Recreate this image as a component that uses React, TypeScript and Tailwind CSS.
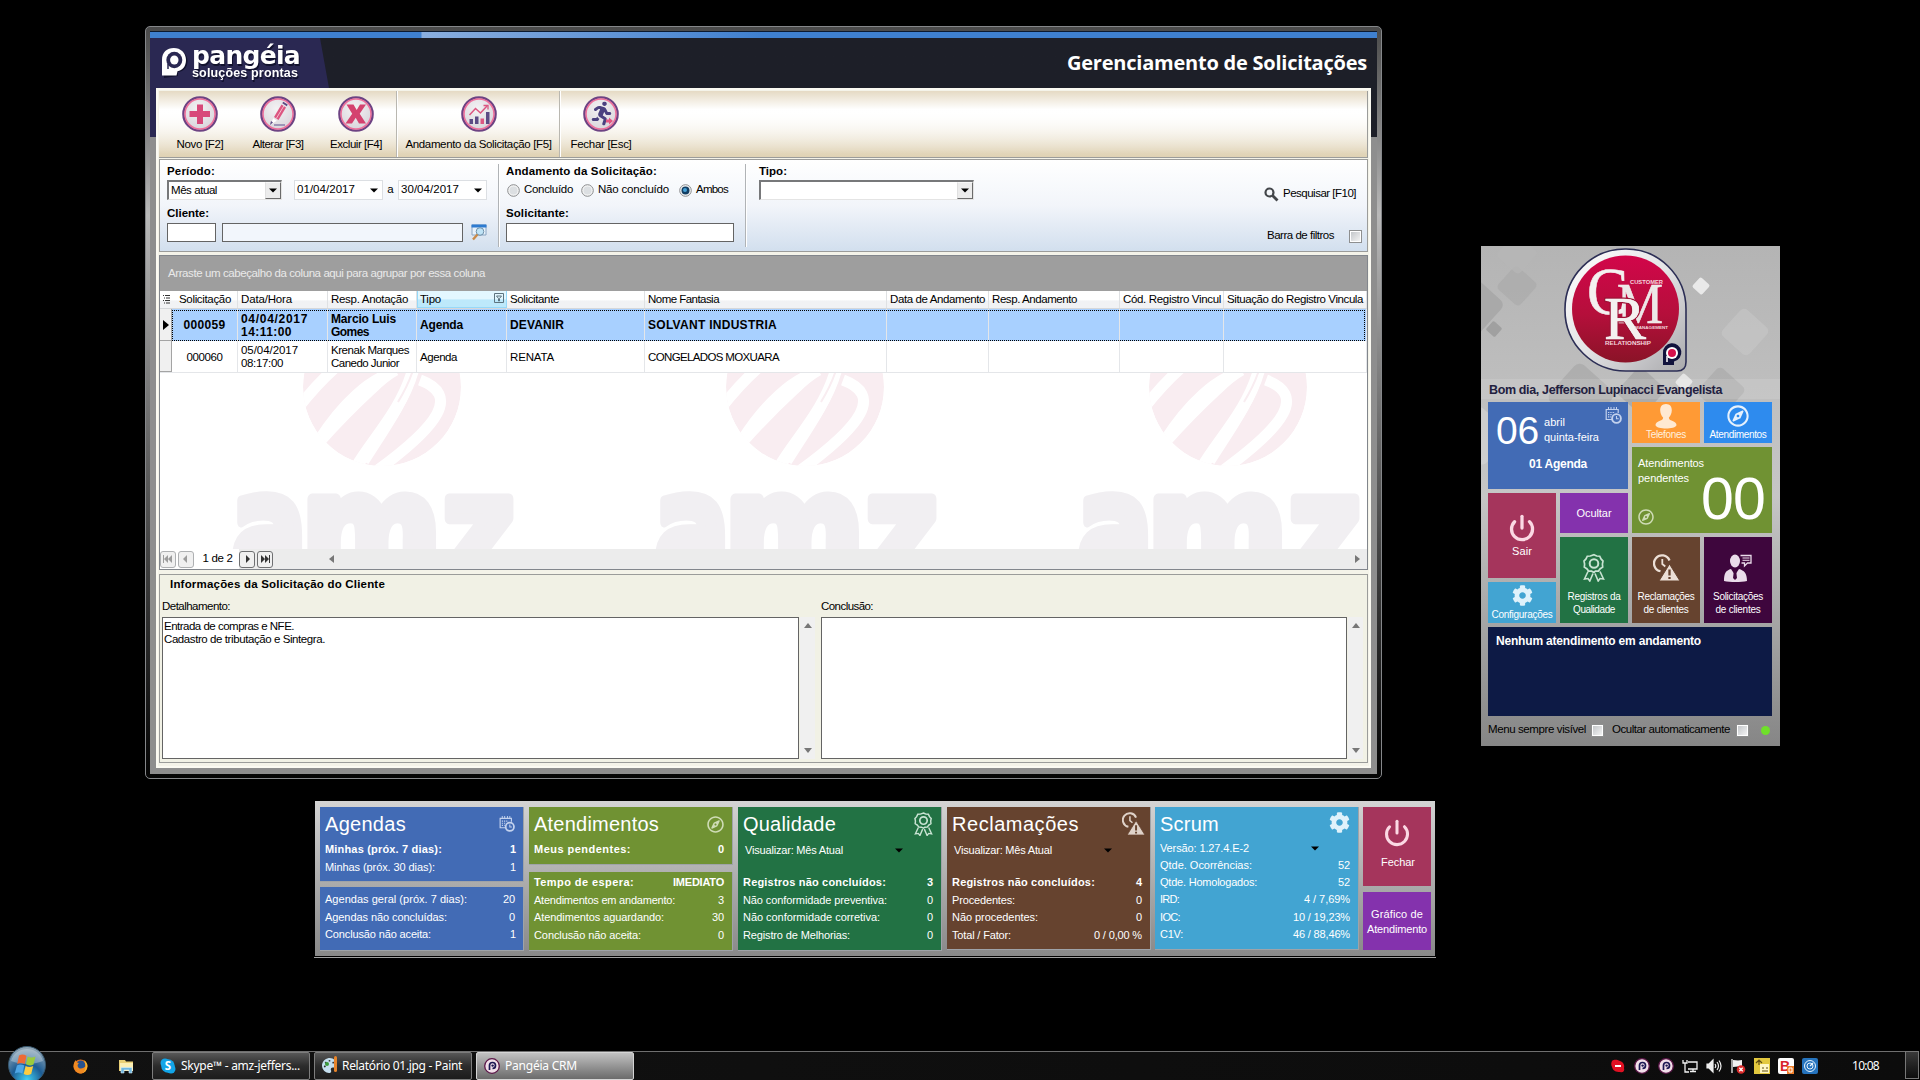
import React, { useLayoutEffect, useRef } from "react";
import { Power } from "lucide-react";
import { FaCog, FaRegCompass, FaRunning, FaPalette } from "react-icons/fa";

type FitProps = { w: number; children: string; className?: string };

/* Tracks a run of text in or out so that it occupies exactly `w` pixels. */
function Fit({ w, children, className = "" }: FitProps) {
  const ref = useRef<HTMLSpanElement>(null);
  useLayoutEffect(() => {
    const el = ref.current;
    if (!el) return;
    el.style.width = "max-content";
    el.style.letterSpacing = "0px";
    const natural = el.getBoundingClientRect().width;
    el.style.letterSpacing = `${(w - natural) / children.length}px`;
    el.style.width = `${w}px`;
  }, [w, children]);
  return (
    <span ref={ref} className={`inline-block shrink-0 whitespace-nowrap ${className}`}>
      {children}
    </span>
  );
}

/* ---------- icons ---------- */

function RoundIcon({ children }: { children: React.ReactNode }) {
  return (
    <svg width="38" height="38" viewBox="0 0 38 38">
      <defs>
        <radialGradient id="rg" cx="0.45" cy="0.35" r="0.7">
          <stop offset="0" stopColor="#f4f2f4" />
          <stop offset="1" stopColor="#d5d2d8" />
        </radialGradient>
      </defs>
      <circle cx="19" cy="19" r="16.6" fill="url(#rg)" stroke="#6d4383" strokeWidth="2.4" />
      <circle cx="19" cy="19" r="15" fill="none" stroke="#ee6f9b" strokeWidth="1.5" />
      {children}
    </svg>
  );
}

const NovoIcon = () => (
  <RoundIcon>
    <path d="M16 9.5h6v6.5h7v6h-7v7h-6v-7H8.500v-6H16z" fill="#d8497a" />
  </RoundIcon>
);
const AlterarIcon = () => (
  <RoundIcon>
    <path d="M22.500 9.500l4.500 3-7.500 12.500-4.500-3z" fill="#dc5681" />
    <path d="M23.300 8.200l1-1.400 4.400 2.800-.9 1.700z" fill="#5b4a84" />
    <path d="M14.200 23.200l3.600 2.500-6.300 4z" fill="#fff" />
    <path d="M24.800 11l-7.500 12.500" stroke="#f5b9cc" strokeWidth="1" />
    <path d="M12 26l2 1.500-3 2.500z" fill="#5b4a84" />
    <path d="M15 30h11" stroke="#8c84ad" strokeWidth="1.600" />
  </RoundIcon>
);
const ExcluirIcon = () => (
  <RoundIcon>
    <path d="M9.500 9.500h7l3.200 5.600 3.300-5.600h6l-6.300 9.300 6.300 9.700h-7l-3.300-5.700-3.700 5.700h-6.500l6.700-9.700z" fill="#d4426f" />
  </RoundIcon>
);
const ChartIcon = () => (
  <RoundIcon>
    <path d="M9.500 29v-5h3.500v5zM15 29v-7.500h3.500V29z" fill="#5b4a84" />
    <path d="M20.500 29v-5.500H24V29z" fill="#dc5681" />
    <path d="M26 29V17h3.500v12z" fill="#5b4a84" />
    <path d="M9.500 20l6-6.500 5 4.500 6.500-7" stroke="#dc5681" strokeWidth="1.500" fill="none" />
    <path d="M23.500 10.500h4.500v4" stroke="#dc5681" strokeWidth="1.300" fill="none" />
  </RoundIcon>
);
const RunIcon = () => (
  <RoundIcon>
    <g transform="translate(7.500 6.500)">
      <FaRunning size={24} color="#4b4180" />
    </g>
    <path d="M24 24.500h3v-2l4 3.500-4 3.500v-2h-3z" fill="#e35583" />
  </RoundIcon>
);

const CalendarClockIcon = ({ size, color }: { size: number; color: string }) => (
  <svg width={size} height={size} viewBox="0 0 17 17" fill="none" stroke={color}>
    <path d="M.7 2.500h13M1.200 2v10.500H7M13.200 2.500v3.500" strokeWidth="1.200" />
    <path d="M3.500 0v3M6 0v3M9 0v3M11.500 0v3" strokeWidth="1" />
    <path d="M3 5.500h7M3 7.700h4.500M3 9.900h3" strokeWidth="1.200" strokeDasharray="1.300 1" />
    <circle cx="11.500" cy="11.500" r="4.400" strokeWidth="1.900" />
    <path d="M11.500 9v2.700h2.200" strokeWidth="1.100" />
  </svg>
);

const AwardIcon = ({ w, h, color }: { w: number; h: number; color: string }) => (
  <svg width={w} height={h} viewBox="0 0 22 28" fill="none" stroke={color}>
    <path d="M11 1.200l2.700 1.300 3 .2 1.300 2.700 2 2.200-.6 3 .3 3-2.500 1.600-1.800 2.400-3 .1L11 18.900l-2.400-1.200-3-.1-1.800-2.400-2.500-1.600.3-3-.6-3 2-2.200 1.300-2.700 3-.2z" strokeWidth="1.700" />
    <circle cx="11" cy="10" r="4.300" strokeWidth="2" />
    <path d="M5 18L1.500 25.500l3.500-.5 1.800 2.500L10 20M17 18l3.500 7.500-3.500-.5-1.800 2.500L12 20" strokeWidth="1.600" />
  </svg>
);

const ClockWarnIcon = ({ w, h, color, cut }: { w: number; h: number; color: string; cut: string }) => (
  <svg width={w} height={h} viewBox="0 0 27 27" fill="none">
    <path d="M7.500 16.700A8 8 0 1 1 16.500 6" stroke={color} strokeWidth="2.300" />
    <path d="M9.300 4.500v5l3 2.500" stroke={color} strokeWidth="1.800" />
    <path d="M16.500 9.500L27 26.500H6z" fill={color} stroke={cut} strokeWidth="1" />
    <path d="M16.500 15v6M16.500 22.600v2" stroke={cut} strokeWidth="2.300" />
  </svg>
);

const BustIcon = () => (
  <svg width="22" height="25" viewBox="0 0 22 25">
    <path d="M11 0c4 0 6 2.800 5.800 6.500-.2 3-1.300 5.600-2.900 7 0 1.600.5 2.100 2.600 3 3.300 1.400 5 2.500 5 4.500 0 2.500-6 3.500-10.500 3.500S.500 23.500.500 21c0-2 1.700-3.100 5-4.500 2.100-.9 2.600-1.400 2.600-3-1.600-1.400-2.700-4-2.900-7C5 2.800 7 0 11 0z" fill="#ffe9d2" />
  </svg>
);

const ClientIcon = () => (
  <svg width="28" height="28" viewBox="0 0 28 28">
    <ellipse cx="11" cy="7" rx="5" ry="6.500" fill="#eadcea" />
    <path d="M0 27c0-8 2-10.500 7-12l4 6 4-6c5 1.500 8 4 8 12-6 1.300-17 1.300-23 0z" fill="#eadcea" />
    <path d="M10 16h2l1 8-2 2-2-2z" fill="#41093f" />
    <path d="M16.500 1.500H27V9h-3.500l-3 3V9H17.500" fill="#41093f" stroke="#eadcea" strokeWidth="1.300" />
    <path d="M18.500 4h7M18.500 6.300h7" stroke="#eadcea" strokeWidth="1" />
  </svg>
);

const PangeiaMark = () => (
  <svg width="27" height="31" viewBox="0 0 27 31">
    <path d="M2 30V13C2 5 7 1.500 13.500 1.500S25.500 6 25.500 13c0 6.500-4 10.500-9.500 11v4z" transform="translate(1 1)" fill="#12122e" />
    <path d="M1 28.500V13C1 5 6 1 12.800 1S25 5.800 25 13c0 6.300-3.500 10.500-8.500 11.300L15.500 28.500z" fill="#fff" />
    <ellipse cx="13.300" cy="13" rx="8" ry="8.300" fill="#2a2852" />
    <ellipse cx="13.300" cy="13" rx="4.200" ry="4.600" fill="#fff" />
    <path d="M7 17v5" stroke="#2a2852" strokeWidth="1.500" />
  </svg>
);

const Caret = ({ className = "" }: { className?: string }) => (
  <svg width="8" height="5" viewBox="0 0 8 5" className={`shrink-0 ${className}`}>
    <path d="M0 .5h8L4 4.500z" fill="#000" />
  </svg>
);

const CheckBox = () => (
  <span className="block size-[13px] shrink-0 border border-[#8e8f8f] bg-white p-px">
    <span className="block size-full bg-linear-to-br from-[#c4c7ca] to-[#f3f3f3]" />
  </span>
);

function Radio({ on = false }: { on?: boolean }) {
  return (
    <svg width="13" height="13" viewBox="0 0 13 13" className="shrink-0">
      <circle cx="6.500" cy="6.500" r="5.800" fill="#f4f4f4" stroke="#8a8c8e" />
      <circle cx="6.500" cy="6.500" r="4" fill={on ? "#123e63" : "#dcdfe2"} />
      {on && <circle cx="6" cy="6" r="2" fill="#45a0d6" />}
    </svg>
  );
}

/* ---------- request window ---------- */

function ToolButton({ icon, label, w, cls }: { icon: React.ReactNode; label: string; w: number; cls: string }) {
  return (
    <div className={`flex flex-col items-center pt-1 ${cls}`}>
      {icon}
      <div className="mt-1 flex h-4 items-center">
        <Fit w={w}>{label}</Fit>
      </div>
    </div>
  );
}

function Combo({ cls, children }: { cls: string; children?: React.ReactNode }) {
  return (
    <div className={`flex h-5 items-center justify-between border-t-2 border-l-2 border-r border-b border-t-[#77787a] border-r-[#e4e4e4] border-b-[#e4e4e4] border-l-[#77787a] bg-white pl-0.5 ${cls}`}>
      {children ?? <span />}
      <span className="flex h-[17px] w-4 items-center justify-center border border-t-[#f8f8f8] border-r-[#6b6b6b] border-b-[#6b6b6b] border-l-[#e0e0e0] bg-[#ececec]">
        <Caret />
      </span>
    </div>
  );
}

function DateBox({ value }: { value: string }) {
  return (
    <div className="flex h-5 w-[89px] items-center justify-between border border-[#dcdfe3] bg-white pr-1 pl-[2px]">
      <Fit w={58}>{value}</Fit>
      <Caret />
    </div>
  );
}

function FilterPanel() {
  return (
    <div className="mt-px flex h-[93px] border border-[#9b9c9a] bg-linear-to-b from-white via-[#f2f5fa] to-[#d2dfee]">
      <div className="w-[338px] pt-1 pl-[7px]">
        <div className="flex h-4 items-center font-bold"><Fit w={48}>Período:</Fit></div>
        <div className="flex h-5 items-center">
          <Combo cls="w-[115px]"><Fit w={46}>Mês atual</Fit></Combo>
          <div className="ml-3"><DateBox value="01/04/2017" /></div>
          <span className="mx-[5px] flex w-[5px] justify-center">a</span>
          <DateBox value="30/04/2017" />
        </div>
        <div className="mt-1.5 flex h-4 items-center font-bold"><Fit w={42}>Cliente:</Fit></div>
        <div className="mt-px flex h-[19px] items-center">
          <span className="h-[19px] w-[49px] border border-[#646464] bg-white" />
          <span className="ml-1.5 h-[19px] w-[241px] border border-[#646464] bg-[#f2f6fc]" />
          <svg width="17" height="17" viewBox="0 0 17 17" className="ml-2">
            <path d="M1 1h14v10H1z" fill="#e8f2fb" stroke="#8aa6c4" />
            <path d="M.5 .5h15v3H.5z" fill="#2e7bd0" />
            <circle cx="9" cy="7.500" r="3.800" fill="#bfe3f6" stroke="#6f8fa8" />
            <path d="M6.500 10.500L2 15.500" stroke="#c98a4a" strokeWidth="2.400" />
          </svg>
        </div>
      </div>
      <div className="my-1 w-[2px] border-l border-[#b0b3b6] bg-white" />
      <div className="w-[245px] pt-1 pl-[6px]">
        <div className="flex h-4 items-center font-bold"><Fit w={151}>Andamento da Solicitação:</Fit></div>
        <div className="flex h-5 items-center pl-px">
          <Radio /><Fit w={49} className="ml-[4px]">Concluído</Fit>
          <span className="ml-2 flex items-center"><Radio /></span><Fit w={71} className="ml-[4px]">Não concluído</Fit>
          <span className="ml-2.5 flex items-center"><Radio on /></span><Fit w={32} className="ml-[4px]">Ambos</Fit>
        </div>
        <div className="mt-1.5 flex h-4 items-center font-bold"><Fit w={63}>Solicitante:</Fit></div>
        <div className="mt-px h-[19px] w-[228px] border border-[#646464] bg-white" />
      </div>
      <div className="my-1 w-[2px] border-l border-[#b0b3b6] bg-white" />
      <div className="flex grow justify-between pt-1 pl-[12px]">
        <div>
          <div className="flex h-4 items-center font-bold"><Fit w={28}>Tipo:</Fit></div>
          <Combo cls="w-[215px]" />
        </div>
        <div className="flex w-[103px] flex-col pt-[21px]">
          <div className="flex h-[18px] items-center">
            <svg width="15" height="15" viewBox="0 0 15 15" fill="none" stroke="#43464a" className="mr-[4px]">
              <circle cx="5.500" cy="5.500" r="4" strokeWidth="2.200" />
              <path d="M8.500 8.500l5 5" strokeWidth="2.800" />
            </svg>
            <Fit w={73}>Pesquisar [F10]</Fit>
          </div>
          <div className="mt-6 flex h-[18px] items-center justify-between pr-[5px] pl-[3px]">
            <Fit w={67}>Barra de filtros</Fit>
            <CheckBox />
          </div>
        </div>
      </div>
    </div>
  );
}

const gridCols = "grid grid-cols-[12px_66px_90px_89px_90px_138px_242px_102px_131px_104px_143px]";

function HeadCell({ w, children, cls = "" }: { w: number; children: string; cls?: string }) {
  return (
    <div className={`flex items-center overflow-hidden border-r border-[#dfe1e3] pt-px pl-[3px] ${cls}`}>
      <Fit w={w}>{children}</Fit>
    </div>
  );
}

function Cell({ lines, cls = "" }: { lines: [string, number][]; cls?: string }) {
  return (
    <div className={`flex flex-col justify-center border-r border-[#e4e6e9] pt-px pl-[3px] leading-[13px] ${cls}`}>
      {lines.map(([t, w]) => <Fit key={t} w={w}>{t}</Fit>)}
    </div>
  );
}

function Watermark() {
  return (
    <svg width="1207" height="176" viewBox="160 373 1207 176" className="block">
      {[0, 423, 846].map((dx) => (
        <g key={dx} transform={`translate(${dx} 0)`}>
          <clipPath id={`orb${dx}`}><circle cx="382" cy="387" r="79" /></clipPath>
          <g clipPath={`url(#orb${dx})`} fill="none" stroke="#fff">
            <circle cx="382" cy="387" r="79" fill="#f9edf1" stroke="none" />
            <path d="M342 362Q320 380 298 408" strokeWidth="11" />
            <path d="M396 371Q385 377 372 390Q345 415 320 443" strokeWidth="9" />
            <path d="M396 371C370 376 340 405 318 440" strokeWidth="9" />
            <path d="M413 370C402 410 372 440 357 466" strokeWidth="12" />
            <path d="M414 372C404 405 385 430 365 462" strokeWidth="8" />
            <path d="M420 380C460 395 440 425 375 472" strokeWidth="11" />
            <path d="M413 370C409 383 404 392 398 402" stroke="#f9edf1" strokeWidth="2" />
          </g>
          <g fontFamily="DejaVu Sans" fontWeight="700" fontSize="156" fill="#f1eff2" stroke="#f1eff2" strokeWidth="11" strokeLinejoin="round">
            <text x="231" y="585" textLength="76" lengthAdjust="spacingAndGlyphs">a</text>
            <text x="301" y="585" textLength="141" lengthAdjust="spacingAndGlyphs">m</text>
            <text x="442" y="585" textLength="73" lengthAdjust="spacingAndGlyphs">z</text>
          </g>
        </g>
      ))}
    </svg>
  );
}

function NavButton({ d, off = false }: { d: string; off?: boolean }) {
  return (
    <span className={`flex h-[17px] w-4 items-center justify-center rounded-[3px] border bg-[#f0f0f0] ${off ? "border-[#aeb0b2]" : "border-[#6f7072]"}`}>
      <svg width="10" height="8" viewBox="0 0 10 8"><path d={d} fill={off ? "#9c9c9c" : "#333"} /></svg>
    </span>
  );
}

function Grid() {
  return (
    <div className="mt-[3px] h-[315px] border border-[#82868c] bg-white">
      <div className="flex h-[35px] items-center bg-[#9e9e9e] pt-px pl-2 text-[#e9e9e9]">
        <Fit w={317}>Arraste um cabeçalho da coluna aqui para agrupar por essa coluna</Fit>
      </div>
      <div className={`${gridCols} h-[18px] border-b border-[#d5d7da] bg-linear-to-b from-white from-50% to-[#f1f2f4] to-60%`}>
        <div className="flex items-center justify-center">
          <svg width="7" height="9" viewBox="0 0 7 9" stroke="#333"><path d="M0 .5h1M2 .5h5M1 3h1M3 3h4M0 5.500h1M2 5.500h5M1 8h1M3 8h4" /></svg>
        </div>
        <HeadCell w={52} cls="!pl-[7px]">Solicitação</HeadCell>
        <HeadCell w={51}>Data/Hora</HeadCell>
        <HeadCell w={77}>Resp. Anotação</HeadCell>
        <div className="flex items-center justify-between border border-t-0 border-[#96d9f9] bg-linear-to-b from-[#e3f7ff] from-50% to-[#bde9fb] to-55% pt-0.5 pr-0.5 pl-[2px]">
          <Fit w={21}>Tipo</Fit>
          <svg width="10" height="10" viewBox="0 0 10 10" fill="none" stroke="#5d7480" className="-mt-1"><path d="M.5 .5h9v9h-9zM2.500 3h5L5.500 5.500V8h-1V5.500z" /></svg>
        </div>
        <HeadCell w={49}>Solicitante</HeadCell>
        <HeadCell w={71}>Nome Fantasia</HeadCell>
        <HeadCell w={95}>Data de Andamento</HeadCell>
        <HeadCell w={85}>Resp. Andamento</HeadCell>
        <HeadCell w={98}>Cód. Registro Vincul</HeadCell>
        <HeadCell w={136}>Situação do Registro Vincula</HeadCell>
      </div>
      <div className={`${gridCols} relative h-[32px] bg-[#a8d0ff] text-[12px] font-bold`}>
        <div className="flex items-center justify-center border-r border-b border-[#a4a4a4] bg-[#f0f0f0]">
          <svg width="6" height="10" viewBox="0 0 6 10"><path d="M0 0l6 5-6 5z" /></svg>
        </div>
        <Cell lines={[["000059", 42]]} cls="items-center !pl-0" />
        <Cell lines={[["04/04/2017", 67], ["14:11:00", 51]]} />
        <Cell lines={[["Marcio Luis", 65], ["Gomes", 38]]} />
        <Cell lines={[["Agenda", 43]]} />
        <Cell lines={[["DEVANIR", 54]]} />
        <Cell lines={[["SOLVANT INDUSTRIA", 129]]} />
        <Cell lines={[]} /><Cell lines={[]} /><Cell lines={[]} /><Cell lines={[]} />
        <div className="absolute top-px right-0.5 bottom-0 left-3 border border-dotted border-black" />
      </div>
      <div className={`${gridCols} h-[32px] border-b border-[#e4e6e9]`}>
        <div className="border-r border-b border-[#a4a4a4] bg-[#f0f0f0]" />
        <Cell lines={[["000060", 36]]} cls="items-center !pl-0" />
        <Cell lines={[["05/04/2017", 57], ["08:17:00", 42]]} />
        <Cell lines={[["Krenak Marques", 78], ["Canedo Junior", 68]]} />
        <Cell lines={[["Agenda", 37]]} />
        <Cell lines={[["RENATA", 44]]} />
        <Cell lines={[["CONGELADOS MOXUARA", 131]]} />
        <Cell lines={[]} /><Cell lines={[]} /><Cell lines={[]} /><Cell lines={[]} />
      </div>
      <Watermark />
      <div className="flex h-[20px] items-center bg-[#ececec]">
        <div className="flex h-full items-center gap-0.5 bg-white">
          <NavButton off d="M1 0v8H0V0zM5 0v8L1 4zM9 0v8L5 4z" />
          <NavButton off d="M6 0v8L2 4z" />
          <span className="flex w-[43px] justify-center"><Fit w={30}>1 de 2</Fit></span>
        </div>
        <div className="flex items-center gap-0.5">
          <NavButton d="M4 0v8l4-4z" />
          <NavButton d="M1 0v8l4-4zM5 0v8l4-4zM9 0h1v8H9z" />
        </div>
        <div className="ml-[56px] flex grow items-center justify-between pr-[7px]">
          <svg width="5" height="8" viewBox="0 0 5 8"><path d="M5 0v8L0 4z" fill="#777" /></svg>
          <svg width="5" height="8" viewBox="0 0 5 8"><path d="M0 0v8l5-4z" fill="#777" /></svg>
        </div>
      </div>
    </div>
  );
}

function VScroll() {
  return (
    <div className="ml-px flex w-[15px] flex-col items-center justify-between bg-[#f0f0f0] py-[6px]">
      <svg width="8" height="5" viewBox="0 0 8 5"><path d="M0 5h8L4 0z" fill="#777" /></svg>
      <svg width="8" height="5" viewBox="0 0 8 5"><path d="M0 0h8L4 5z" fill="#777" /></svg>
    </div>
  );
}

function RequestWindow() {
  return (
    <div className="absolute top-[26px] left-[145px] h-[753px] w-[1237px] rounded-[5px] border border-[#85878a] bg-linear-to-b from-[#4a4a4a] via-[#b9b9b9] via-25% to-[#050505] to-25.1% p-[4px] text-[11.5px] leading-none text-black">
      <div className="flex h-[743px] flex-col bg-[#0b1a30] pt-px">
        <div className="h-[6px] shrink-0 bg-linear-to-r from-[#3f80cf] from-[271px] via-[#8aaede] via-[272px] to-[#3f80cf] to-50%" />
        <div className="h-[737px] bg-linear-to-b from-[#1d1f28] from-[99px] to-[#8e8e8e] to-[99px]">
          <div className="relative flex h-[50px] items-center justify-between pr-[10px]">
            <svg width="180" height="99" viewBox="0 0 180 99" className="absolute top-0 left-0">
              <path d="M0 0h170l9 50H6v49H0z" fill="#2a2852" />
            </svg>
            <div className="relative flex pl-[11px]">
              <div><PangeiaMark /></div>
              <div className="ml-[4px] flex flex-col text-white drop-shadow-[1px_2px_0_#12122e]">
                <Fit w={108} className="-mt-[5px] font-['DejaVu_Sans'] text-[25px] leading-[27px] font-bold">pangéia</Fit>
                <Fit w={106} className="-mt-0.5 font-['Liberation_Sans'] text-[12.5px] leading-[12px] font-bold">soluções prontas</Fit>
              </div>
            </div>
            <Fit w={300} className="font-['Open_Sans'] text-[20px] font-bold text-white">Gerenciamento de Solicitações</Fit>
          </div>
          <div className="mx-[6px] h-[680px] border-2 border-[#fbfaf2] bg-[#f4f3e9] px-px">
            <div className="mt-px flex h-[67px] border-r border-b border-[#9b9c9a] bg-linear-to-b from-[#e5dac4] via-white via-28% to-[#dfd2b4]">
              <div className="flex grow bg-linear-to-b from-transparent from-28% via-white via-30% to-transparent to-95%">
                <ToolButton icon={<NovoIcon />} label="Novo [F2]" w={47} cls="ml-[2px] w-[78px]" />
                <ToolButton icon={<AlterarIcon />} label="Alterar [F3]" w={51} cls="w-[78px]" />
                <ToolButton icon={<ExcluirIcon />} label="Excluir [F4]" w={52} cls="w-[78px]" />
                <div className="ml-px w-[2px] border-l border-[#b9b7b0] bg-white" />
                <ToolButton icon={<ChartIcon />} label="Andamento da Solicitação [F5]" w={146} cls="w-[161px]" />
                <div className="w-[2px] border-l border-[#b9b7b0] bg-white" />
                <ToolButton icon={<RunIcon />} label="Fechar [Esc]" w={61} cls="w-[80px]" />
              </div>
            </div>
            <FilterPanel />
            <Grid />
            <div className="mt-[4px] flex h-[189px] flex-col border border-[#9b9c9a] bg-[#f1f1e5]">
              <div className="flex h-[20px] items-center pl-[10px] font-bold"><Fit w={215}>Informações da Solicitação do Cliente</Fit></div>
              <div className="mt-[3px] flex h-[18px] items-center">
                <div className="w-[658px] pl-[2px]"><Fit w={68}>Detalhamento:</Fit></div>
                <Fit w={52} className="ml-[3px]">Conclusão:</Fit>
              </div>
              <div className="mt-px flex h-[142px] pl-[2px]">
                <div className="flex w-[637px] flex-col border border-[#646464] bg-white pt-[2px] pl-px leading-[13px]">
                  <Fit w={130}>Entrada de compras e NFE.</Fit>
                  <Fit w={161}>Cadastro de tributação e Sintegra.</Fit>
                </div>
                <VScroll />
                <div className="ml-[6px] w-[526px] border border-[#646464] bg-white" />
                <VScroll />
              </div>
            </div>
          </div>
        </div>
      </div>
    </div>
  );
}

/* ---------- CRM side menu ---------- */

function MenuBackdrop() {
  const diamonds: [number, number, number, string, number][] = [
    [-8, 60, 46, "#a2a2a2", 0.7], [36, 40, 30, "#a6a6a6", 0.5], [13, 83, 12, "#9a9a9a", 0.8], [36, 8, 30, "#b6b6b6", 0.7],
    [220, 40, 13, "#eeeeee", 0.9], [203, 136, 13, "#e8e8e8", 0.9], [264, 86, 36, "#c9c9c9", 0.5], [100, 150, 50, "#9f9f9f", 0.5],
    [160, 145, 36, "#989898", 0.5], [240, 145, 36, "#a4a4a4", 0.5], [0, 190, 44, "#dadada", 0.5], [80, 200, 60, "#aaaaaa", 0.5],
  ];
  return (
    <svg width="299" height="500" viewBox="0 0 299 500" className="absolute inset-0">
      {diamonds.map(([x, y, s, c, o], i) => (
        <rect key={i} x={x - s / 2} y={y - s / 2} width={s} height={s} rx={s / 7} fill={c} opacity={o} transform={`rotate(42 ${x} ${y})`} />
      ))}
      <rect y="133" width="299" height="20" fill="#fff" opacity="0.12" />
    </svg>
  );
}

function CrmLogo() {
  return (
    <svg width="126" height="126" viewBox="0 0 126 126">
      <defs>
        <linearGradient id="rim" x1="0" y1="0" x2="1" y2="1">
          <stop offset="0" stopColor="#ffffff" /><stop offset="0.5" stopColor="#e4e4e6" /><stop offset="1" stopColor="#a9a9ac" />
        </linearGradient>
        <linearGradient id="red" x1="0" y1="0" x2="0" y2="1">
          <stop offset="0" stopColor="#d2064a" /><stop offset="0.55" stopColor="#b50f3b" /><stop offset="1" stopColor="#8a1327" />
        </linearGradient>
      </defs>
      <path d="M62 2a60 60 0 0 1 61 60v53c0 6-3 9-9 9H65A61 61 0 0 1 2 62 60 60 0 0 1 62 2z" fill="url(#rim)" stroke="#2c2e55" strokeWidth="1.600" />
      <circle cx="62.500" cy="62" r="53.500" fill="url(#red)" />
      <g fontFamily="Liberation Serif" fill="#f4f1f0" stroke="#f4f1f0" strokeWidth="0.600">
        <text x="24" y="67" fontSize="68" textLength="41" lengthAdjust="spacingAndGlyphs">C</text>
        <text x="54" y="76" fontSize="56" textLength="46" lengthAdjust="spacingAndGlyphs" fill="#ece7e7">M</text>
        <text x="41" y="92" fontSize="62" textLength="42" lengthAdjust="spacingAndGlyphs" stroke="#9b1436" strokeWidth="3" paintOrder="stroke">R</text>
        <text x="41" y="92" fontSize="62" textLength="42" lengthAdjust="spacingAndGlyphs">R</text>
      </g>
      <g fontFamily="Liberation Sans" fontWeight="700" fill="#f3d5dc">
        <text x="67" y="37" fontSize="5" textLength="33" lengthAdjust="spacingAndGlyphs">CUSTOMER</text>
        <text x="72" y="81.500" fontSize="4" textLength="33" lengthAdjust="spacingAndGlyphs">MANAGEMENT</text>
        <text x="42" y="98" fontSize="4.500" textLength="46" lengthAdjust="spacingAndGlyphs">RELATIONSHIP</text>
      </g>
      <path d="M100 118v-12a9.200 9.200 0 1 1 11 8.500V118z" fill="#11123c" />
      <circle cx="109" cy="106" r="6" fill="#fff" /><circle cx="109" cy="106" r="4" fill="#d5114b" />
      <path d="M104 109v6" stroke="#fff" strokeWidth="1.500" />
    </svg>
  );
}

function CrmMenu() {
  return (
    <div className="absolute top-[246px] left-[1481px] h-[500px] w-[299px] overflow-hidden bg-linear-to-b from-[#b4b4b4] via-[#c6c6c6] via-50% to-[#868686] text-[11px] leading-none text-white">
      <MenuBackdrop />
      <div className="relative flex h-full flex-col pl-[7px]">
        <div className="flex h-[133px] pl-[75px] pt-px"><CrmLogo /></div>
        <div className="flex h-[23px] items-center pl-px font-bold text-[#22203f]">
          <Fit w={233} className="text-[12.5px]">Bom dia, Jefferson Lupinacci Evangelista</Fit>
        </div>
        <div className="grid grid-cols-[68px_68px_68px_68px] grid-rows-[41px_42px_40px_41px_41px_89px] gap-1">
          <div className="relative col-span-2 row-span-2 bg-[#426bb5]">
            <div className="flex items-center pt-[7px] pl-2">
              <Fit w={43} className="text-[39px] leading-[44px]">06</Fit>
              <div className="-mt-[2px] ml-[5px] flex flex-col text-[11px] leading-[15px]">
                <Fit w={21}>abril</Fit><Fit w={55}>quinta-feira</Fit>
              </div>
            </div>
            <div className="mt-[3px] flex justify-center text-[12px] leading-[16px] font-bold"><Fit w={58}>01 Agenda</Fit></div>
            <div className="absolute top-[5px] right-[6px]"><CalendarClockIcon size={17} color="#c3d2ee" /></div>
          </div>
          <div className="flex flex-col items-center bg-[#ff9a35] pt-[2px]">
            <BustIcon /><Fit w={40} className="mt-px text-[10px] text-[#fff0df]">Telefones</Fit>
          </div>
          <div className="flex flex-col items-center bg-[#2e8bee] pt-[3px]">
            <FaRegCompass size={22} color="#e6f1fd" /><Fit w={57} className="mt-[3px] text-[10px]">Atendimentos</Fit>
          </div>
          <div className="relative col-span-2 row-span-2 bg-[#709233] pt-[9px] pl-[6px] leading-[15px]">
            <div className="flex flex-col"><Fit w={66}>Atendimentos</Fit><Fit w={51}>pendentes</Fit></div>
            <div className="absolute bottom-[8px] left-[6px]"><FaRegCompass size={16} color="#cfdcb6" /></div>
            <div className="absolute right-[7px] bottom-[4px] flex"><Fit w={64} className="text-[59px] leading-[60px]">00</Fit></div>
          </div>
          <div className="row-span-2 flex flex-col items-center bg-[#a5355c] pt-[21px]">
            <Power size={28} color="#fbd9e4" strokeWidth={2.800} /><Fit w={20} className="mt-[4px]">Sair</Fit>
          </div>
          <div className="flex items-center justify-center bg-[#8432ad]"><Fit w={35}>Ocultar</Fit></div>
          <div className="row-span-2 flex flex-col items-center bg-[#227244] pt-[16px] text-[10px] leading-[13px]">
            <AwardIcon w={22} h={29} color="#c9e4d3" />
            <Fit w={53} className="mt-2">Registros da</Fit><Fit w={42}>Qualidade</Fit>
          </div>
          <div className="row-span-2 flex flex-col items-center bg-[#66432f] pt-[17px] text-[10px] leading-[13px]">
            <ClockWarnIcon w={27} h={28} color="#ecdfd6" cut="#66432f" />
            <Fit w={57} className="mt-2">Reclamações</Fit><Fit w={45}>de clientes</Fit>
          </div>
          <div className="row-span-2 flex flex-col items-center bg-[#3e063d] pt-[17px] text-[10px] leading-[13px]">
            <ClientIcon />
            <Fit w={50} className="mt-2">Solicitações</Fit><Fit w={45}>de clientes</Fit>
          </div>
          <div className="flex flex-col items-center bg-[#42a4d2] pt-[3px]">
            <FaCog size={21} color="#dff2fb" /><Fit w={61} className="mt-[4px] text-[10px]">Configurações</Fit>
          </div>
          <div className="col-span-4 bg-[#0d1a45] pt-[7px] pl-2 text-[12px] leading-[14px] font-bold">
            <Fit w={205}>Nenhum atendimento em andamento</Fit>
          </div>
        </div>
        <div className="flex h-7 items-center text-[11.5px] text-black">
          <Fit w={98}>Menu sempre visível</Fit>
          <span className="ml-[5px]"><CheckBox /></span>
          <Fit w={118} className="ml-[8px]">Ocultar automaticamente</Fit>
          <span className="ml-[6px]"><CheckBox /></span>
          <span className="ml-[12px] size-[9px] rounded-full bg-[#6fe02a]" />
        </div>
      </div>
    </div>
  );
}

/* ---------- indicator strip ---------- */

type Stat = [string, number, string, number, boolean?];

function StatRow({ s, gap = "h-[17.5px]" }: { s: Stat; gap?: string }) {
  return (
    <div className={`flex items-center justify-between ${gap} ${s[4] ? "font-bold" : ""}`}>
      <Fit w={s[1]}>{s[0]}</Fit><Fit w={s[3]}>{s[2]}</Fit>
    </div>
  );
}

function TileTitle({ title, w, icon }: { title: string; w: number; icon: React.ReactNode }) {
  return (
    <div className="flex h-[34px] items-center justify-between">
      <Fit w={w} className="text-[20px]">{title}</Fit>{icon}
    </div>
  );
}

function Visualizar() {
  return (
    <div className="flex h-[18px] items-center justify-between pr-[30px] pl-[2px]">
      <Fit w={98}>Visualizar: Mês Atual</Fit><Caret />
    </div>
  );
}

const tile = "border-r border-b border-[#9fa3a8] pr-2 pl-[5px]";

function IndicatorStrip() {
  return (
    <div className="absolute top-[801px] left-[314px] w-[1122px] border-b border-[#a2a2a2] pb-px text-[11px] leading-none text-white">
      <div className="mx-px flex h-[155px] bg-linear-to-b from-[#d3d3d3] to-[#898989] pt-[6px] pl-[5px]">
        <div className="w-[204px]">
          <div className={`${tile} h-[75px] bg-[#426bb5]`}>
            <TileTitle title="Agendas" w={81} icon={<CalendarClockIcon size={16} color="#c3d2ee" />} />
            <StatRow s={["Minhas (próx. 7 dias):", 117, "1", 5, true]} />
            <StatRow s={["Minhas (próx. 30 dias):", 110, "1", 5]} />
          </div>
          <div className={`${tile} mt-[5px] h-[64px] bg-[#426bb5] pt-[4px]`}>
            <StatRow s={["Agendas geral (próx. 7 dias):", 142, "20", 12]} />
            <StatRow s={["Agendas não concluídas:", 122, "0", 6]} />
            <StatRow s={["Conclusão não aceita:", 106, "1", 5]} />
          </div>
        </div>
        <div className="ml-[5px] w-[204px]">
          <div className={`${tile} h-[58px] bg-[#709233]`}>
            <TileTitle title="Atendimentos" w={125} icon={<FaRegCompass size={17} color="#cfdcb6" />} />
            <StatRow s={["Meus pendentes:", 97, "0", 6, true]} />
          </div>
          <div className={`${tile} mt-[7px] h-[79px] bg-[#709233] pt-[2px]`}>
            <StatRow s={["Tempo de espera:", 100, "IMEDIATO", 51, true]} />
            <StatRow s={["Atendimentos em andamento:", 141, "3", 6]} />
            <StatRow s={["Atendimentos aguardando:", 130, "30", 12]} />
            <StatRow s={["Conclusão não aceita:", 107, "0", 6]} />
          </div>
        </div>
        <div className={`${tile} ml-[5px] h-[144px] w-[204px] bg-[#227244]`}>
          <TileTitle title="Qualidade" w={93} icon={<AwardIcon w={19} h={24} color="#c9e4d3" />} />
          <Visualizar />
          <div className="mt-[15px]">
            <StatRow s={["Registros não concluídos:", 143, "3", 6, true]} />
            <StatRow s={["Não conformidade preventiva:", 144, "0", 6]} />
            <StatRow s={["Não conformidade corretiva:", 137, "0", 6]} />
            <StatRow s={["Registro de Melhorias:", 107, "0", 6]} />
          </div>
        </div>
        <div className={`${tile} ml-[5px] h-[143px] w-[204px] bg-[#66432f]`}>
          <TileTitle title="Reclamações" w={127} icon={<span className="-mr-[3px]"><ClockWarnIcon w={23} h={24} color="#dfd2c9" cut="#66432f" /></span>} />
          <Visualizar />
          <div className="mt-[15px]">
            <StatRow s={["Registros não concluídos:", 143, "4", 6, true]} />
            <StatRow s={["Procedentes:", 63, "0", 6]} />
            <StatRow s={["Não procedentes:", 86, "0", 6]} />
            <StatRow s={["Total / Fator:", 59, "0 / 0,00 %", 48]} />
          </div>
        </div>
        <div className={`${tile} ml-[4px] h-[143px] w-[204px] bg-[#42a4d2]`}>
          <TileTitle title="Scrum" w={59} icon={<FaCog size={21} color="#dff2fb" className="-mt-[3px]" />} />
          <div className="flex h-[15px] items-center justify-between pr-[31px]"><Fit w={89}>Versão: 1.27.4.E-2</Fit><Caret /></div>
          <StatRow gap="h-[18px]" s={["Qtde. Ocorrências:", 92, "52", 12]} />
          <StatRow gap="h-[17px]" s={["Qtde. Homologados:", 97, "52", 12]} />
          <StatRow s={["IRD:", 19, "4 / 7,69%", 46]} />
          <StatRow s={["IOC:", 20, "10 / 19,23%", 57]} />
          <StatRow s={["C1V:", 23, "46 / 88,46%", 57]} />
        </div>
        <div className="ml-[4px] w-[68px]">
          <div className="flex h-[79px] flex-col items-center bg-[#a5355c] pt-[12px]">
            <Power size={28} color="#fbd9e4" strokeWidth={2.600} />
            <Fit w={34} className="mt-[10px] ml-[2px]">Fechar</Fit>
          </div>
          <div className="mt-[6px] flex h-[58px] flex-col items-center justify-center bg-[#8432ad] pt-[2px] leading-[15px]">
            <Fit w={52}>Gráfico de</Fit><Fit w={60}>Atendimento</Fit>
          </div>
        </div>
      </div>
    </div>
  );
}

/* ---------- taskbar ---------- */

function TaskButton({ icon, label, w, active = false }: { icon: React.ReactNode; label: string; w: number; active?: boolean }) {
  return (
    <div className={`flex h-[28px] w-[158px] items-center gap-[5px] rounded-[2px] border pb-px pl-[7px] ${active ? "border-[#d5d5d5] bg-linear-to-b from-[#c2c2c2] via-[#9a9a9a] via-45% to-[#6b6b6b]" : "border-[#7d7d7d] bg-linear-to-b from-[#585858] via-[#2c2c2c] via-50% to-[#1c1c1c]"}`}>
      {icon}<Fit w={w}>{label}</Fit>
    </div>
  );
}

const PangeiaRound = () => (
  <svg width="16" height="16" viewBox="0 0 16 16">
    <circle cx="8" cy="8" r="7.300" fill="#f1dfe9" stroke="#5b1648" strokeWidth="1.300" />
    <path d="M5.500 12V7.500a3 3 0 1 1 3 3" stroke="#1a1652" strokeWidth="1.700" fill="none" />
    <circle cx="8.600" cy="7.600" r="1.200" fill="#1a1652" />
  </svg>
);

function Taskbar() {
  return (
    <div className="absolute bottom-0 left-0 flex h-[35px] w-[1920px] font-['Noto_Sans'] text-[12px] leading-none text-white">
      <div className="mt-[6px] flex h-[29px] grow items-center border-t border-[#6f6f6f] bg-linear-to-r from-[#111] to-[#0c0c0c]">
        <svg width="40" height="38" viewBox="0 0 40 38" className="-mt-[4px] ml-[7px] shrink-0 overflow-visible">
          <defs>
            <radialGradient id="orb" cx="0.5" cy="0.9" r="0.85">
              <stop offset="0" stopColor="#3fd0f4" /><stop offset="0.5" stopColor="#1c5c94" /><stop offset="1" stopColor="#8fa5b5" />
            </radialGradient>
          </defs>
          <circle cx="20" cy="20" r="18.500" fill="url(#orb)" stroke="#37576e" />
          <path d="M4 16C8 0 32 0 36 16c-10 4-22 4-32 0z" fill="#e6eef3" opacity="0.350" />
          <path d="M12 10.500c3-1.500 5-1 7.500.3L17.700 19c-2.500-1.300-5-1.300-7.500 0z" fill="#ee6a35" />
          <path d="M20.700 11.500c2.500 1.200 5 1.200 7.800 0l-2 8c-2.500 1.200-5 1.200-7.600-.2z" fill="#9bcb3c" />
          <path d="M9.900 20.500c2.500-1.400 5-1.200 7.400 0l-2 8c-2.500-1.300-5-1.300-7.500 0z" fill="#4ea6e6" />
          <path d="M18.600 21c2.500 1.300 5 1.200 7.600 0l-2 8c-2.600 1.300-5 1.300-7.500 0z" fill="#fccc3f" />
        </svg>
        <svg width="15" height="15" viewBox="0 0 15 15" className="ml-[26px] shrink-0">
          <circle cx="7.500" cy="7.500" r="7" fill="#e8711c" /><circle cx="7.800" cy="6" r="4.500" fill="#27528f" />
          <path d="M.7 6C1 3 2 2 3 1c0 2 1 3 3 3-1 1-2 2-1 4 2 3 6 1 8-1 1 5-3 8-6 7.500S0 10 .7 6z" fill="#f08a22" />
          <path d="M11 1c3 2 4 5 3 8-.5 2-2 4-4 5 2-3 3-5 2.500-8z" fill="#f5b52c" />
        </svg>
        <svg width="17" height="15" viewBox="0 0 17 15" className="ml-[30px] shrink-0">
          <path d="M1 1h6l1 1.500h7V12H1z" fill="#e9cf76" /><path d="M2 4h13v8H2z" fill="#fbeeb4" />
          <path d="M3 14V8.500h11V14h-3v-3H6v3z" fill="#6fb7e0" stroke="#d9eef9" strokeWidth="0.600" />
        </svg>
        <div className="ml-[17px] flex gap-[4px]">
          <TaskButton w={119} label="Skype™ - amz-jeffers..." icon={
            <svg width="16" height="16" viewBox="0 0 16 16" className="shrink-0"><circle cx="8" cy="8" r="6.800" fill="#12a5e8" /><circle cx="5" cy="5" r="4.500" fill="#12a5e8" /><circle cx="11" cy="11" r="4.500" fill="#12a5e8" /><text x="8" y="12" textAnchor="middle" fontFamily="Open Sans" fontWeight="700" fontSize="11.500" fill="#fff">S</text></svg>} />
          <TaskButton w={120} label="Relatório 01.jpg - Paint" icon={
            <span className="relative"><FaPalette size={15} color="#c5dfef" /><span className="absolute -top-0.5 right-0 h-4 w-[3px] rounded-full bg-[#e8842a]" /><span className="absolute top-1 left-[3px] size-1 rounded-full bg-[#3a9b3c]" /></span>} />
          <TaskButton active w={72} label="Pangéia CRM" icon={<PangeiaRound />} />
        </div>
        <div className="ml-auto flex items-center gap-[8px]">
          <svg width="16" height="16" viewBox="0 0 16 16"><path d="M2 3c3-2 5-1 8 0 3 1 5 4 4 7 1 3-1 5-4 4-4 0-7-1-8-5-1-2-1-4 0-6z" fill="#e01022" /><path d="M5 8h6" stroke="#fff" strokeWidth="2" /></svg>
          <PangeiaRound /><PangeiaRound />
          <svg width="16" height="16" viewBox="0 0 16 16" fill="none" stroke="#f2f2f2" strokeWidth="1.300"><path d="M6 4h9v7H6M8 13.500h6M11 11v2.500M3 7v7h4M1 2v3h4V2M3 5v2" /></svg>
          <svg width="16" height="16" viewBox="0 0 16 16" fill="none" stroke="#eee" strokeWidth="1.200"><path d="M1 6h2l4-4v12l-4-4H1z" fill="#eee" /><path d="M9 6q1.500 2 0 4M11 4q3 4 0 8M13 2.500q4 5.500 0 11" /></svg>
          <svg width="16" height="16" viewBox="0 0 16 16"><path d="M2 1v14" stroke="#eee" strokeWidth="1.300" /><path d="M3 2l5 .5L12 2v7l-4-.5-5 .5z" fill="#f2f2f2" /><circle cx="11" cy="11.500" r="4.300" fill="#d92b2b" /><path d="M9.300 9.800l3.400 3.400M12.700 9.800l-3.400 3.400" stroke="#fff" strokeWidth="1.300" /></svg>
          <svg width="16" height="16" viewBox="0 0 16 16"><path d="M0 0h16v16H0z" fill="#e3c83e" /><path d="M6 6h9v9H6z" fill="#fff6c4" /><path d="M2 5l3-3 3 3M5 2v5M8 10h2M12 10h2M8 13h6" stroke="#5e4c13" strokeWidth="1.200" fill="none" /></svg>
          <svg width="16" height="16" viewBox="0 0 16 16"><rect width="16" height="16" rx="2" fill="#fff" /><text x="2" y="13" fontFamily="Liberation Sans" fontWeight="700" fontSize="14" fill="#d8232a">B</text><path d="M9 8h7v8H9z" fill="#f07f2a" /><path d="M11 10h3v4h-3z" fill="none" stroke="#fff" /></svg>
          <svg width="16" height="16" viewBox="0 0 16 16" fill="none" stroke="#e8f3fc"><rect width="16" height="16" rx="2" fill="#2573bd" stroke="none" /><circle cx="8" cy="8" r="5.500" /><circle cx="8" cy="8" r="3" /><path d="M8 8l3-3" strokeWidth="1.300" /></svg>
        </div>
        <Fit w={27} className="mr-[26px] ml-[34px]">10:08</Fit>
      </div>
      <div className="mt-[6px] mr-px h-[28px] w-[14px] border border-[#777] bg-linear-to-b from-[#3a3a3a] to-[#0d0d0d]" />
    </div>
  );
}

export default function App() {
  return (
    <div className="relative h-[1080px] w-[1920px] overflow-hidden bg-black font-['Liberation_Sans',sans-serif]">
      <RequestWindow />
      <CrmMenu />
      <IndicatorStrip />
      <Taskbar />
    </div>
  );
}
